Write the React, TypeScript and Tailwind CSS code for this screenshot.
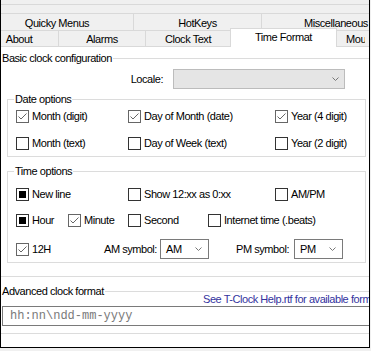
import React from "react";

type BoxState = "on" | "off" | "fill";

function Box({ state }: { state: BoxState }) {
	if (state === "fill") {
		return (
			<span className="w-[13px] h-[13px] shrink-0 border border-[#333] bg-white flex items-center justify-center">
				<span className="w-[7px] h-[7px] bg-black"></span>
			</span>
		);
	}
	if (state === "on") {
		return (
			<span className="w-[13px] h-[13px] shrink-0 border border-[#666] bg-white flex">
				<svg width="11" height="11" viewBox="0 0 11 11">
					<polyline points="1.5,5.5 4,8 9.5,2.5" fill="none" stroke="#666" strokeWidth="1" />
				</svg>
			</span>
		);
	}
	return <span className="w-[13px] h-[13px] shrink-0 border border-[#333] bg-white"></span>;
}

function Check({ state, label, className = "" }: { state: BoxState; label: string; className?: string }) {
	return (
		<div className={`flex items-center shrink-0 ${className}`}>
			<Box state={state} />
			<span className="ml-[3px] whitespace-nowrap">{label}</span>
		</div>
	);
}

function Chevron() {
	return (
		<svg width="7" height="4" viewBox="0 0 7 4" className="shrink-0">
			<polyline points="0.5,0.5 3.5,3.5 6.5,0.5" fill="none" stroke="#777" strokeWidth="1" />
		</svg>
	);
}

function Combo({ value, className = "" }: { value: string; className?: string }) {
	return (
		<div className={`h-[20px] border border-[#7a7a7a] bg-white flex items-center justify-between pl-[5px] pr-[6px] shrink-0 ${className}`}>
			<span>{value}</span>
			<Chevron />
		</div>
	);
}

export default function App() {
	return (
		<div className="w-[371px] h-[351px] bg-[#f0f0f0] text-black font-['Liberation_Sans',Arial,sans-serif] text-[11px] leading-[13px] tracking-[-0.45px]">
			<div className="w-[370px] h-[348px] border-l border-r border-b border-black flex flex-col overflow-hidden">
				{/* top strip */}
				<div className="h-[4px] shrink-0"></div>
				<div className="h-[9px] shrink-0 border-t border-[#d9d9d9]"></div>

				{/* tab row 1 */}
				<div className="h-[17px] shrink-0 flex -ml-[20px]">
					<div className="w-[153px] shrink-0 border-t border-r border-[#d9d9d9] pt-[3px] text-center">Quicky Menus</div>
					<div className="w-[128px] shrink-0 border-t border-r border-[#d9d9d9] pt-[3px] text-center">HotKeys</div>
					<div className="w-[148px] shrink-0 border-t border-[#d9d9d9] pt-[3px] text-center">Miscellaneous</div>
				</div>

				{/* tab row 2 */}
				<div className="h-[16px] shrink-0 flex items-start -ml-[21px]">
					<div className="w-[79px] h-[16px] shrink-0 border-t border-r border-[#d9d9d9] pt-[2px] text-center">About</div>
					<div className="w-[87px] h-[16px] shrink-0 border-t border-r border-[#d9d9d9] pt-[2px] text-center">Alarms</div>
					<div className="w-[84px] h-[16px] shrink-0 border-t border-[#d9d9d9] pt-[2px] text-center">Clock Text</div>
					<div className="relative z-10 w-[107px] h-[19px] -mt-[2px] shrink-0 bg-white border-t border-l border-r border-[#d9d9d9] pt-[2px] text-center">
						Time Format
					</div>
					<div className="w-[80px] h-[16px] shrink-0 border-t border-[#d9d9d9] pt-[2px] pl-[9px]">
						<div className="w-[19px] overflow-hidden whitespace-nowrap">Mouse</div>
					</div>
				</div>

				{/* page */}
				<div className="flex-1 bg-white border-t border-[#d9d9d9] pt-[11px] flex flex-col">
					{/* Basic clock configuration */}
					<div className="border-t border-b border-[#dcdcdc] pb-[13px] flex flex-col">
						<div className="-mt-[7px] h-[13px]">
							<span className="bg-white px-[1px] whitespace-nowrap">Basic clock configuration</span>
						</div>

						<div className="mt-[4px] flex items-center">
							<div className="w-[172px] shrink-0 text-right pr-[10px]">Locale:</div>
							<div className="w-[172px] h-[20px] shrink-0 border border-[#bcbcbc] bg-[#e5e5e5] flex items-center justify-end pr-[5px]">
								<Chevron />
							</div>
						</div>

						{/* Date options */}
						<div className="mt-[10px] ml-[6px] w-[359px] border border-[#dcdcdc] pb-[6px] flex flex-col">
							<div className="-mt-[7px] h-[13px] ml-[6px]">
								<span className="bg-white px-[1px]">Date options</span>
							</div>
							<div className="mt-[4px] h-[13px] flex pl-[8px]">
								<Check state="on" label="Month (digit)" className="w-[112px]" />
								<Check state="on" label="Day of Month (date)" className="w-[147px]" />
								<Check state="on" label="Year (4 digit)" />
							</div>
							<div className="mt-[14px] h-[13px] flex pl-[8px]">
								<Check state="off" label="Month (text)" className="w-[112px]" />
								<Check state="off" label="Day of Week (text)" className="w-[147px]" />
								<Check state="off" label="Year (2 digit)" />
							</div>
						</div>

						{/* Time options */}
						<div className="mt-[14px] ml-[6px] w-[359px] border border-[#dcdcdc] pb-[3px] flex flex-col">
							<div className="-mt-[7px] h-[13px] ml-[6px]">
								<span className="bg-white px-[1px]">Time options</span>
							</div>
							<div className="mt-[10px] h-[13px] flex pl-[8px]">
								<Check state="fill" label="New line" className="w-[112px]" />
								<Check state="off" label="Show  12:xx as 0:xx" className="w-[147px]" />
								<Check state="off" label="AM/PM" />
							</div>
							<div className="mt-[13px] h-[13px] flex pl-[8px]">
								<Check state="fill" label="Hour" className="w-[52px]" />
								<Check state="on" label="Minute" className="w-[60px]" />
								<Check state="off" label="Second" className="w-[80px]" />
								<Check state="off" label="Internet time (.beats)" />
							</div>
							<div className="mt-[12px] h-[20px] flex items-center pl-[8px]">
								<Check state="on" label="12H" className="w-[88px]" />
								<div className="w-[56px] shrink-0 text-right pr-[6px] whitespace-nowrap">AM symbol:</div>
								<Combo value="AM" className="w-[49px]" />
								<div className="w-[85px] shrink-0 text-right pr-[5px] whitespace-nowrap">PM symbol:</div>
								<Combo value="PM" className="w-[49px]" />
							</div>
						</div>
					</div>

					{/* Advanced clock format */}
					<div className="mt-[14px] border-t border-b border-[#dcdcdc] pb-[7px] flex flex-col">
						<div className="h-[14px] flex items-end">
							<div className="w-[202px] shrink-0 self-start -mt-[7px] h-[13px]">
								<span className="bg-white px-[1px] whitespace-nowrap">Advanced clock format</span>
							</div>
							<span className="whitespace-nowrap text-[#33339e]">See T-Clock Help.rtf for available formats</span>
						</div>
						<div className="ml-[1px] w-[420px] h-[20px] shrink-0 border border-[#7a7a7a] flex items-center pl-[7px] font-['Liberation_Mono','Courier_New',monospace] text-[12px] tracking-normal text-[#7a7a7a] whitespace-nowrap">
							{"hh:nn\\ndd-mm-yyyy"}
						</div>
					</div>
				</div>
			</div>
		</div>
	);
}
